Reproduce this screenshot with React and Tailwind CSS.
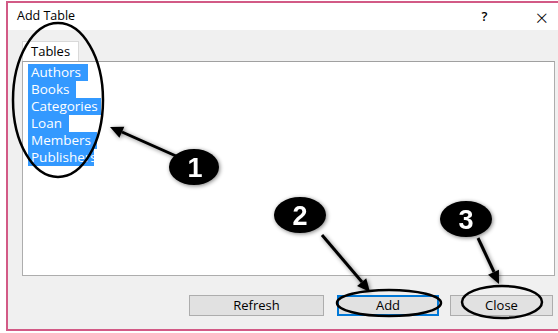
import React from 'react';

const tables = [
  { name: 'Authors', w: 60 },
  { name: 'Books', w: 48 },
  { name: 'Categories', w: 73 },
  { name: 'Loan', w: 41 },
  { name: 'Members', w: 69 },
  { name: 'Publishers', w: 66 },
];

function Annotations() {
  const arrow = 'M0,0 L-13,-6 L-13,6 Z';
  return (
    <svg className="absolute inset-0 pointer-events-none" width="558" height="333" viewBox="0 0 558 333">
      <defs>
        <filter id="glow" x="-50%" y="-50%" width="200%" height="200%">
          <feGaussianBlur in="SourceAlpha" stdDeviation="2" />
          <feOffset dx="1" dy="1" />
          <feComponentTransfer><feFuncA type="linear" slope="0.5" /></feComponentTransfer>
          <feMerge><feMergeNode /><feMergeNode in="SourceGraphic" /></feMerge>
        </filter>
      </defs>
      <g fill="none" stroke="#000" strokeWidth="2.5">
        <ellipse cx="58" cy="100" rx="45" ry="77" />
        <ellipse cx="389" cy="303" rx="52" ry="13" />
        <ellipse cx="502" cy="302" rx="40" ry="16" />
      </g>
      <g filter="url(#glow)">
        <line x1="176" y1="156" x2="122" y2="132" stroke="#000" strokeWidth="3" />
        <path d={arrow} transform="translate(110,127) rotate(204)" fill="#000" />
        <line x1="322" y1="235" x2="362" y2="282" stroke="#000" strokeWidth="3" />
        <path d={arrow} transform="translate(370,292) rotate(50)" fill="#000" />
        <line x1="478" y1="238" x2="494" y2="272" stroke="#000" strokeWidth="3" />
        <path d={arrow} transform="translate(499,284) rotate(65)" fill="#000" />
        <ellipse cx="194" cy="167" rx="25" ry="18" fill="#000" />
        <ellipse cx="300" cy="215" rx="26" ry="18" fill="#000" />
        <ellipse cx="466" cy="219" rx="26" ry="18" fill="#000" />
      </g>
      <g fill="#fff" fontFamily="'Liberation Sans', Arial, sans-serif" fontWeight="bold" fontSize="27" textAnchor="middle">
        <text x="195" y="177">1</text>
        <text x="300" y="225">2</text>
        <text x="466" y="229">3</text>
      </g>
    </svg>
  );
}

export default function App() {
  return (
    <div className="relative w-[558px] h-[333px] bg-white pl-[6px] pt-[1px] overflow-hidden" style={{ fontFamily: "'Open Sans', 'Noto Sans', sans-serif" }}>
      <div className="h-[330px] flex flex-col border-l-2 border-t-2 border-b-2 border-[#d25a86]">
        {/* title bar */}
        <div className="h-[27px] bg-white flex items-center pl-[9px] pr-[10px] text-[12.5px] text-black">
          <span className="flex-1">Add Table</span>
          <span className="mr-[48px] text-[13px] font-semibold">?</span>
          <span className="text-[22px] font-light leading-none">×</span>
        </div>

        {/* body */}
        <div className="flex-1 bg-[#f0f0f0] flex flex-col pl-[14px] pr-[3px]">
          <div className="mt-[11px] flex">
            <div className="h-[20px] w-[57px] bg-white border border-b-0 border-[#d9d9d9] text-[13px] pl-[8px] leading-[19px] text-black">
              Tables
            </div>
          </div>
          <div className="h-[215px] bg-white border border-[#adadad] border-t-[#a0a0a0] pt-[2px] pl-[5px]">
            <div className="w-[73px] overflow-hidden flex flex-col">
              {tables.map((t) => (
                <div key={t.name} className="h-[17px] flex">
                  <div
                    className="h-full bg-[#3399ff] text-white text-[13.5px] leading-[17px] pl-[3px] whitespace-nowrap overflow-hidden"
                    style={{ width: t.w }}
                  >
                    {t.name}
                  </div>
                </div>
              ))}
            </div>
          </div>

          {/* buttons */}
          <div className="mt-[19px] flex text-[13px] text-black">
            <div className="ml-[167px] w-[135px] h-[21px] bg-[#e1e1e1] border border-[#adadad] flex items-center justify-center">Refresh</div>
            <div className="ml-[13px] w-[102px] h-[21px] bg-[#e1e1e1] border-2 border-[#0078d7] flex items-center justify-center">Add</div>
            <div className="ml-[11px] w-[103px] h-[21px] bg-[#e1e1e1] border border-[#adadad] flex items-center justify-center">Close</div>
          </div>
        </div>
      </div>
      <Annotations />
    </div>
  );
}
